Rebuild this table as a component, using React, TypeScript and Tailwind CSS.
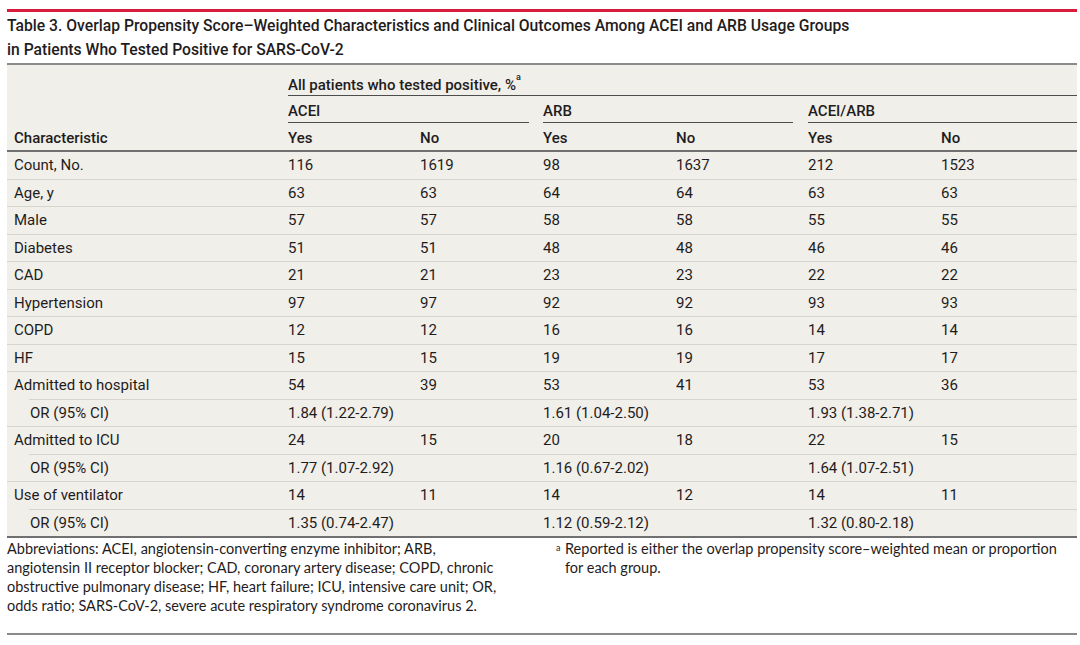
import React from "react";

type Row =
  | { kind: "val"; label: string; vals: string[] }
  | { kind: "or"; vals: string[] };

const rows: Row[] = [
  { kind: "val", label: "Count, No.", vals: ["116", "1619", "98", "1637", "212", "1523"] },
  { kind: "val", label: "Age, y", vals: ["63", "63", "64", "64", "63", "63"] },
  { kind: "val", label: "Male", vals: ["57", "57", "58", "58", "55", "55"] },
  { kind: "val", label: "Diabetes", vals: ["51", "51", "48", "48", "46", "46"] },
  { kind: "val", label: "CAD", vals: ["21", "21", "23", "23", "22", "22"] },
  { kind: "val", label: "Hypertension", vals: ["97", "97", "92", "92", "93", "93"] },
  { kind: "val", label: "COPD", vals: ["12", "12", "16", "16", "14", "14"] },
  { kind: "val", label: "HF", vals: ["15", "15", "19", "19", "17", "17"] },
  { kind: "val", label: "Admitted to hospital", vals: ["54", "39", "53", "41", "53", "36"] },
  { kind: "or", vals: ["1.84 (1.22-2.79)", "1.61 (1.04-2.50)", "1.93 (1.38-2.71)"] },
  { kind: "val", label: "Admitted to ICU", vals: ["24", "15", "20", "18", "22", "15"] },
  { kind: "or", vals: ["1.77 (1.07-2.92)", "1.16 (0.67-2.02)", "1.64 (1.07-2.51)"] },
  { kind: "val", label: "Use of ventilator", vals: ["14", "11", "14", "12", "14", "11"] },
  { kind: "or", vals: ["1.35 (0.74-2.47)", "1.12 (0.59-2.12)", "1.32 (0.80-2.18)"] },
];

const cols = "grid grid-cols-[281px_132px_123px_133px_132px_133px_136px]";

export default function App() {
  return (
    <div className="w-[1080px] h-[645px] bg-white pt-[9px] pl-[7px] pr-[3px] text-[#1f1c1d] font-['Roboto',sans-serif]">
      <div className="h-[3px] bg-[#d91c3c]" />
      <h1 className="mt-[2px] text-[15.7px] leading-[24px] font-medium">
        Table 3. Overlap Propensity Score–Weighted Characteristics and Clinical Outcomes Among ACEI and ARB Usage Groups
        <br />
        in Patients Who Tested Positive for SARS-CoV-2
      </h1>
      <div className="mt-[1px] h-[2px] bg-[#8a8a8a]" />

      <div className="bg-[#f1efe9] text-[15px] leading-[20px]">
        {/* header */}
        <div className={cols}>
          <div className="h-[30px]" />
          <div className="col-span-6 h-[31px] flex items-end border-b border-[#4d4d4d] font-medium">
            <span>
              All patients who tested positive, %<sup className="text-[9px] align-[6px]">a</sup>
            </span>
          </div>
        </div>
        <div className={cols}>
          <div />
          <div className="col-span-2 mr-[14px] h-[27px] flex items-end pb-[1px] border-b border-[#4d4d4d] font-medium">ACEI</div>
          <div className="col-span-2 mr-[15px] h-[27px] flex items-end pb-[1px] border-b border-[#4d4d4d] font-medium">ARB</div>
          <div className="col-span-2 h-[27px] flex items-end pb-[1px] border-b border-[#4d4d4d] font-medium">ACEI/ARB</div>
        </div>
        <div className={`${cols} h-[27px] items-end pb-[2px] font-medium`}>
          <div className="pl-[7px]">Characteristic</div>
          <div>Yes</div>
          <div>No</div>
          <div>Yes</div>
          <div>No</div>
          <div>Yes</div>
          <div>No</div>
        </div>
        <div className="h-[2px] bg-[#707070]" />

        {/* body */}
        {rows.map((r, i) => {
          const last = i === rows.length - 1;
          const nextIsOr = !last && rows[i + 1].kind === "or";
          return (
            <div key={i}>
              {r.kind === "val" ? (
                <div className={`${cols} h-[26.5px] items-center`}>
                  <div className="pl-[7px]">{r.label}</div>
                  {r.vals.map((v, j) => (
                    <div key={j}>{v}</div>
                  ))}
                </div>
              ) : (
                <div className={`${cols} h-[26.5px] items-center`}>
                  <div className="pl-[23px]">OR (95% CI)</div>
                  {r.vals.map((v, j) => (
                    <div key={j} className="col-span-2">{v}</div>
                  ))}
                </div>
              )}
              {!last && (
                <div className={nextIsOr ? "ml-[22px] h-px bg-[#d8d5cd]" : "h-px bg-[#d8d5cd]"} />
              )}
            </div>
          );
        })}
      </div>
      <div className="h-[2px] bg-[#707070]" />

      {/* footnotes */}
      <div className="h-[95px] pt-[1px] flex font-['Lato',sans-serif] text-[14.5px] leading-[19px]">
        <p className="w-[549px]">
          Abbreviations: ACEI, angiotensin-converting enzyme inhibitor; ARB,
          <br />
          angiotensin II receptor blocker; CAD, coronary artery disease; COPD, chronic
          <br />
          obstructive pulmonary disease; HF, heart failure; ICU, intensive care unit; OR,
          <br />
          odds ratio; SARS-CoV-2, severe acute respiratory syndrome coronavirus 2.
        </p>
        <p className="flex-1 flex">
          <sup className="w-[9px] text-[9px] mt-[4px] top-0 leading-none">a</sup>
          <span>
            Reported is either the overlap propensity score–weighted mean or proportion
            <br />
            for each group.
          </span>
        </p>
      </div>
      <div className="h-[2px] bg-[#8a8a8a]" />
    </div>
  );
}
